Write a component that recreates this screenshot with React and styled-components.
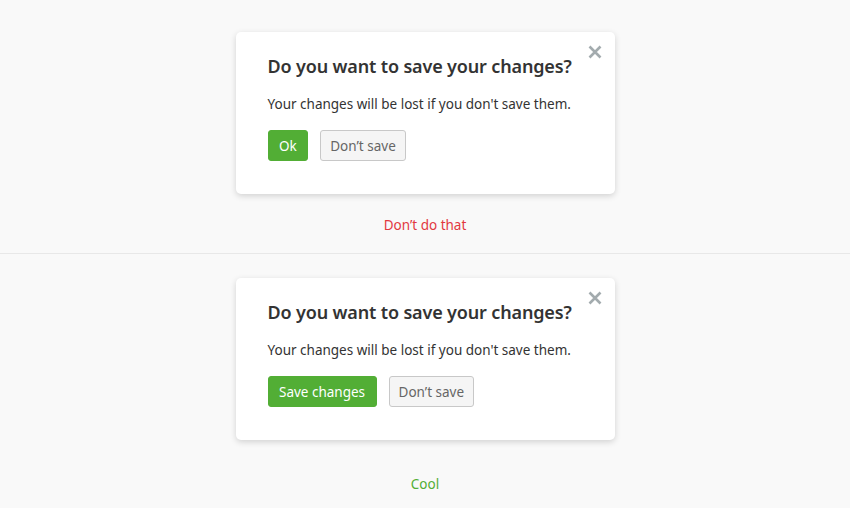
import React from 'react';
import styled, { createGlobalStyle } from 'styled-components';

const GlobalStyle = createGlobalStyle`
  html, body {
    margin: 0;
    padding: 0;
    background: #f9f9f9;
    font-family: "Noto Sans", "Open Sans", sans-serif;
    color: #333;
  }
`;

const Page = styled.div`
  width: 850px;
  min-height: 508px;
  background: #f9f9f9;
`;

const Section = styled.section`
  display: flex;
  flex-direction: column;
  align-items: center;
  padding: ${(p) => p.$pad};
  gap: ${(p) => p.$gap};
  border-bottom: ${(p) => (p.$divider ? '1px solid #e8e8e8' : 'none')};
`;

const Dialog = styled.div`
  position: relative;
  box-sizing: border-box;
  width: 379px;
  height: 162px;
  padding: 20px 32px 0 32px;
  background: #fff;
  border-radius: 5px;
  box-shadow: 0 2px 6px rgba(0, 0, 0, 0.16);
`;

const Close = styled.button`
  position: absolute;
  top: 9px;
  right: 9px;
  width: 22px;
  height: 22px;
  padding: 0;
  border: none;
  background: transparent;
  display: flex;
  align-items: center;
  justify-content: center;
  cursor: pointer;
`;

const Title = styled.h2`
  margin: 0;
  font-size: 18px;
  line-height: 28px;
  font-weight: 600;
  color: #333;
  letter-spacing: -0.15px;
  white-space: nowrap;
`;

const Body = styled.p`
  margin: 14px 0 0;
  font-size: 13.5px;
  line-height: 20px;
  color: #333;
`;

const Actions = styled.div`
  display: flex;
  gap: 12px;
  margin-top: 16px;
`;

const Button = styled.button`
  box-sizing: border-box;
  height: 31px;
  padding: 0 ${(p) => (p.$primary ? '10.5px' : '9px')};
  border-radius: 3px;
  font-family: "Noto Sans", "Open Sans", sans-serif;
  font-size: 13.5px;
  cursor: pointer;
  background: ${(p) => (p.$primary ? '#52ae35' : '#f5f5f5')};
  color: ${(p) => (p.$primary ? '#fff' : '#666')};
  border: 1px solid ${(p) => (p.$primary ? '#52ae35' : '#c8c8c8')};
`;

const Note = styled.div`
  font-size: 13.5px;
  line-height: 20px;
  color: ${(p) => p.$color};
`;

const CloseIcon = () => (
  <svg width="14" height="14" viewBox="0 0 14 14">
    <path d="M1.5 1.5 L12.5 12.5 M12.5 1.5 L1.5 12.5" stroke="#a3abae" strokeWidth="2.6" strokeLinecap="butt" />
  </svg>
);

const SaveDialog = ({ primaryLabel }) => (
  <Dialog>
    <Close aria-label="Close">
      <CloseIcon />
    </Close>
    <Title>Do you want to save your changes?</Title>
    <Body>Your changes will be lost if you don't save them.</Body>
    <Actions>
      <Button $primary>{primaryLabel}</Button>
      <Button>Don’t save</Button>
    </Actions>
  </Dialog>
);

const App = () => (
  <Page>
    <GlobalStyle />
    <Section $pad="32px 0 18px" $gap="21px" $divider>
      <SaveDialog primaryLabel="Ok" />
      <Note $color="#e2383f">Don’t do that</Note>
    </Section>
    <Section $pad="24px 0 14px" $gap="34px">
      <SaveDialog primaryLabel="Save changes" />
      <Note $color="#52ae35">Cool</Note>
    </Section>
  </Page>
);

export default App;
